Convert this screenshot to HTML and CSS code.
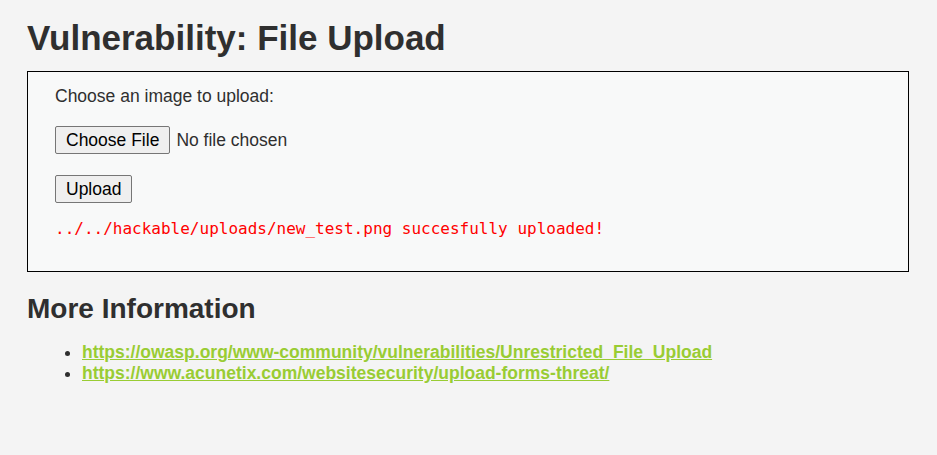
FILE: index.html
```html
<!DOCTYPE html>
<html lang="en">
<head>
  <meta charset="UTF-8">
  <title>Vulnerability: File Upload</title>
  <link rel="stylesheet" href="styles.css">
</head>
<body>
  <div class="body_padded">
    <h1>Vulnerability: File Upload</h1>

    <div class="vulnerable_code_area">
      <form enctype="multipart/form-data" method="POST">
        <input type="hidden" name="MAX_FILE_SIZE" value="100000">
        <p class="label">Choose an image to upload:</p>
        <p class="row"><input name="uploaded" type="file" class="file"></p>
        <p class="row"><input type="submit" name="Upload" value="Upload" class="btn"></p>
      </form>
      <pre>../../hackable/uploads/new_test.png succesfully uploaded!</pre>
    </div>

    <h2>More Information</h2>
    <ul>
      <li><a href="#">https://owasp.org/www-community/vulnerabilities/Unrestricted_File_Upload</a></li>
      <li><a href="#">https://www.acunetix.com/websitesecurity/upload-forms-threat/</a></li>
    </ul>
  </div>
</body>
</html>
```

FILE: styles.css
```css
html { background: #f4f4f4; }
body { margin: 0; background: #f4f4f4; color: #2f2f2f; font-family: "Liberation Sans", Arial, sans-serif; font-size: 17.5px; }
.body_padded { padding: 0 28px 0 27px; }

h1 { font-size: 35px; font-weight: bold; margin: 0; padding: 18px 0 13px; line-height: 40px; color: #2f2f2f; }
h2 { font-size: 28px; font-weight: bold; margin: 21px 0 0; line-height: 32px; color: #2f2f2f; }

.vulnerable_code_area { border: 1px solid #000; background: #f8f9f9; padding: 14px 27px 32px; }
.vulnerable_code_area p { margin: 0; }
.vulnerable_code_area p.label { line-height: 20px; margin-bottom: 20px; }
.vulnerable_code_area p.row { display: flex; align-items: center; height: 28px; margin-bottom: 21px; }
.vulnerable_code_area p.row:last-child { margin-bottom: 16px; }

.file { font-family: "Liberation Sans", Arial, sans-serif; font-size: 17.5px; color: #2f2f2f; }
.file::file-selector-button,
.btn { font-family: "Liberation Sans", Arial, sans-serif; font-size: 17.5px; color: #000; background: #efefef; border: 1px solid #767676; border-radius: 2px; padding: 0 10px; margin: 0 6px 0 0; height: 28px; }

pre { font-family: "DejaVu Sans Mono", monospace; font-size: 16px; color: red; margin: 0; line-height: 20px; }

ul { margin: 17px 0 0; padding-left: 55px; }
li { line-height: 21px; }
a { color: #99cc33; font-weight: bold; }
```
